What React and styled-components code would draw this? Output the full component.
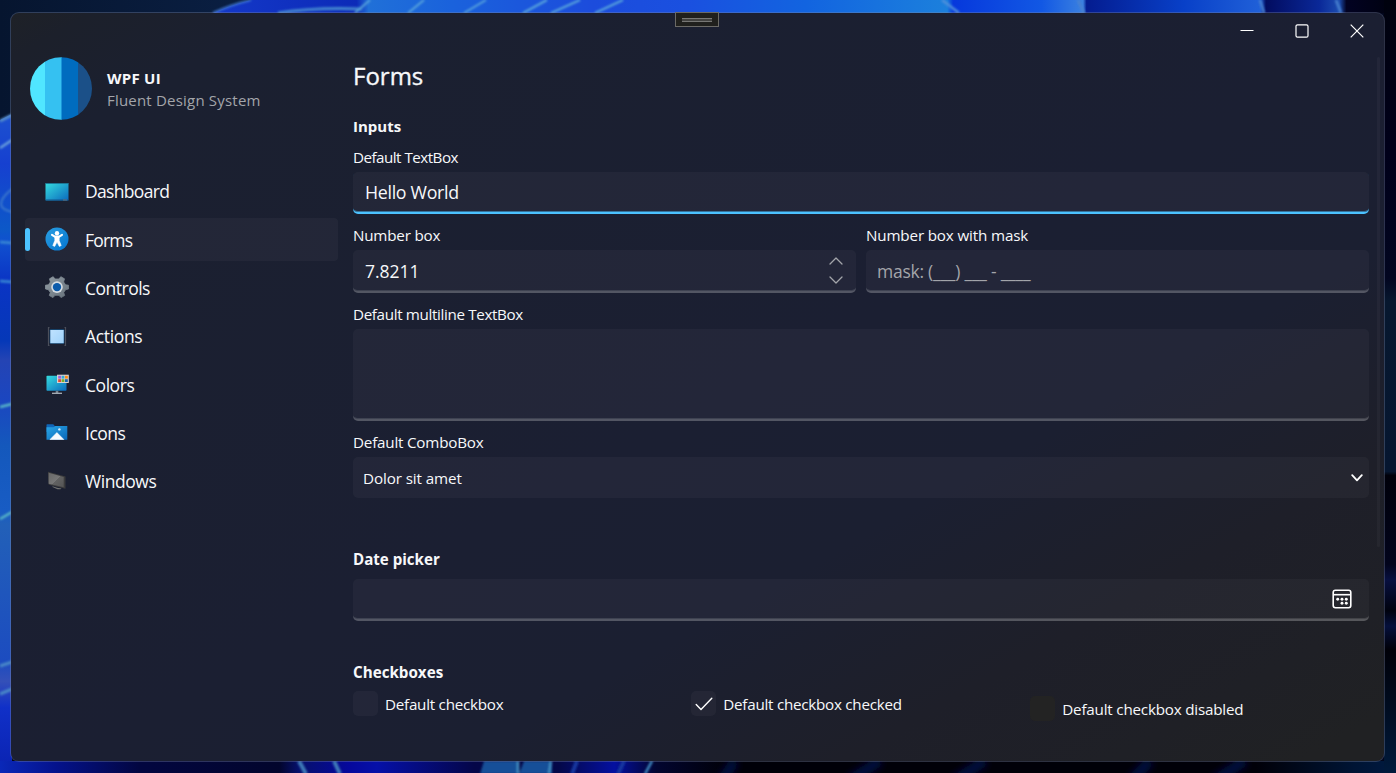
import React from "react";
import styled, { createGlobalStyle } from "styled-components";

const GlobalStyle = createGlobalStyle`
  * { box-sizing: border-box; }
  html, body { margin: 0; height: 100%; overflow: hidden; background: #02061c; }
  body { font-family: "Open Sans", "Noto Sans", sans-serif; color: #fff; }
`;

const Desktop = styled.main`
  position: relative;
  width: 1396px;
  height: 773px;
  padding: 12px 11px 11px 10px;
  overflow: hidden;
`;

const WallpaperSvg = styled.svg`
  position: absolute;
  inset: 0;
`;

const Window = styled.section`
  position: relative;
  width: 1375px;
  height: 750px;
  display: flex;
  border: 1px solid rgba(125, 135, 165, 0.36);
  border-radius: 9px;
  background: linear-gradient(151deg, #1e2127 0%, #1c202b 3%, #1b2030 10%, #1b1f32 52%, #1b1f31 66%, #1e1f29 80%, #1f2026 90%, #202123 97%);
  background-clip: padding-box;
  background-color: #1b2030;
`;

const Handle = styled.div`
  position: absolute;
  left: 664px;
  top: -1px;
  width: 44px;
  height: 15px;
  padding: 5px 6px;
  border: 1px solid #6b6a66;
  background: #20201d;
`;

const Grip = styled.div`
  height: 4px;
  background: #424240;
  border: solid #777775;
  border-width: 1px 0;
`;

const Sidebar = styled.aside`
  width: 342px;
  padding: 44px 15px 0 14px;
`;

const Brand = styled.header`
  display: flex;
  align-items: center;
  gap: 15px;
  height: 63px;
  padding-left: 5px;
`;

const BrandText = styled.div`
  display: flex;
  flex-direction: column;
  gap: 0;
`;

const Text = styled.span`
  display: block;
  white-space: nowrap;
  font-size: ${(p) => p.$size || 15}px;
  line-height: ${(p) => p.$line || 22}px;
  font-weight: ${(p) => p.$weight || 400};
  color: ${(p) => p.$color || "#f7f8fa"};
  letter-spacing: ${(p) => p.$track || 0}px;
`;

const Nav = styled.nav`
  display: flex;
  flex-direction: column;
  gap: 5.3px;
  margin-top: 49.7px;
`;

const NavItem = styled.a`
  display: flex;
  align-items: center;
  height: 43px;
  gap: 14.5px;
  border-radius: 4px;
  background: ${(p) => (p.$active ? "rgba(255,255,255,0.035)" : "transparent")};
`;

const Indicator = styled.i`
  width: 5px;
  height: 23px;
  border-radius: 2.5px;
  background: ${(p) => (p.$active ? "#4cc2ff" : "transparent")};
`;

const NavIcon = styled.svg`
  width: 24px;
  height: 24px;
  margin-bottom: 1px;
`;

const NavLabel = styled(Text)`
  margin-left: 2px;
  padding-top: 0.4px;
`;

const Main = styled.div`
  flex: 1;
  display: flex;
  flex-direction: column;
  padding-right: 4px;
`;

const TitleBar = styled.div`
  display: flex;
  justify-content: flex-end;
  height: 37px;
  margin-right: -4.5px;
`;

const WindowButton = styled.button`
  display: grid;
  place-items: center;
  width: 55px;
  height: 35px;
  padding: 0;
  border: 0;
  background: none;
`;

const Scroller = styled.div`
  display: flex;
  justify-content: space-between;
`;

const Page = styled.div`
  width: 1016px;
`;

const ScrollThumb = styled.div`
  width: 3px;
  height: 490px;
  margin-top: 7px;
  border-radius: 1.5px;
  background: rgba(255, 255, 255, 0.035);
`;

const PageTitle = styled(Text).attrs({ as: "h1" })`
  margin: 8px 0 0;
  -webkit-text-stroke: 0.35px currentColor;
`;

const Section = styled.section`
  margin-top: ${(p) => p.$top}px;
`;

const SectionTitle = styled(Text).attrs({ as: "h2" })`
  margin: 0;
`;

const Field = styled.div`
  flex: 1;
  margin-top: ${(p) => p.$top || 0}px;
`;

const FieldRow = styled.div`
  display: flex;
  gap: 10px;
`;

const InputBox = styled.div`
  display: flex;
  align-items: center;
  justify-content: space-between;
  height: ${(p) => p.$height || 42}px;
  margin-top: ${(p) => p.$gap ?? 5}px;
  padding: 0 ${(p) => p.$right || 12}px 0 ${(p) => p.$left || 12}px;
  border-radius: 5px;
  background: rgba(255, 255, 255, 0.035);
  border-bottom: ${(p) =>
    p.$plain ? "0" : p.$focused ? "2px solid #4cc2ff" : "2px solid rgba(255,255,255,0.22)"};
  box-shadow: ${(p) =>
    p.$plain ? "none" : p.$focused ? "inset 0 -1px rgba(76,194,255,0.5)" : "inset 0 -1px rgba(255,255,255,0.13)"};
`;

const InputValue = styled(Text)`
  padding-top: ${(p) => p.$drop || 0}px;
`;

const Spinner = styled.div`
  display: flex;
  flex-direction: column;
  gap: 11px;
  padding: 0 1px 1px 0;
`;

const CheckGrid = styled.div`
  display: grid;
  grid-template-columns: 338.3px 339px 338.6px;
  margin-top: 9px;
`;

const CheckItem = styled.label`
  display: flex;
  align-items: center;
  gap: 7px;
  height: 25px;
  margin-top: ${(p) => (p.$disabled ? 5 : 0)}px;
`;

const CheckBox = styled.span`
  display: grid;
  place-items: center;
  width: 25px;
  height: 25px;
  border-radius: 5px;
  background: ${(p) => (p.$disabled ? "#232323" : "rgba(255,255,255,0.035)")};
`;

const Bloom = ({ d, w = 2, c = "#4d9fd8", o = 1 }) => (
  <path d={d} fill="none" stroke={c} strokeWidth={w} opacity={o} />
);

const Wallpaper = () => (
  <WallpaperSvg width="1396" height="773" viewBox="0 0 1396 773">
    <defs>
      <linearGradient id="sky"><stop offset="0" stopColor="#06152f" /><stop offset=".6" stopColor="#0a1f42" /><stop offset="1" stopColor="#0a1f42" /></linearGradient>
      <linearGradient id="topBlue" gradientUnits="userSpaceOnUse" x1="215" x2="1396" y1="0" y2="0">
        <stop offset="0" stopColor="#1438c8" /><stop offset=".12" stopColor="#0c2ab8" /><stop offset=".13" stopColor="#2070d8" />
        <stop offset=".2" stopColor="#1a62dc" /><stop offset=".32" stopColor="#1c4cdc" /><stop offset=".4" stopColor="#1a50e0" />
        <stop offset=".5" stopColor="#1264e0" /><stop offset=".62" stopColor="#1c80dc" /><stop offset=".625" stopColor="#0638dc" />
        <stop offset=".7" stopColor="#1258e4" /><stop offset=".735" stopColor="#3a80e0" /><stop offset=".738" stopColor="#041c90" />
        <stop offset=".82" stopColor="#0840c8" /><stop offset=".885" stopColor="#2060d8" /><stop offset=".89" stopColor="#020c60" />
        <stop offset=".935" stopColor="#0a2898" /><stop offset=".952" stopColor="#1c4cb0" /><stop offset=".958" stopColor="#020222" />
        <stop offset="1" stopColor="#00020e" />
      </linearGradient>
      <linearGradient id="leftBlue" gradientUnits="userSpaceOnUse" x1="0" x2="0" y1="118" y2="773">
        <stop offset="0" stopColor="#1c50d0" /><stop offset=".07" stopColor="#1640d0" /><stop offset=".17" stopColor="#0c58c8" />
        <stop offset=".19" stopColor="#1050d0" /><stop offset=".25" stopColor="#0a34c4" /><stop offset=".34" stopColor="#0538b8" />
        <stop offset=".37" stopColor="#2444b4" /><stop offset=".43" stopColor="#1b46c0" /><stop offset=".5" stopColor="#1458bc" />
        <stop offset=".6" stopColor="#185cc4" /><stop offset=".62" stopColor="#2260b8" /><stop offset=".83" stopColor="#1c4cc0" />
        <stop offset=".86" stopColor="#3450b8" /><stop offset=".9" stopColor="#1030c8" /><stop offset="1" stopColor="#0a22b0" />
      </linearGradient>
      <linearGradient id="base" gradientUnits="userSpaceOnUse" x1="0" x2="1396" y1="0" y2="0">
        <stop offset="0" stopColor="#0a28b8" /><stop offset=".04" stopColor="#04128c" /><stop offset=".1" stopColor="#020640" />
        <stop offset=".2" stopColor="#02052c" /><stop offset=".214" stopColor="#06106c" /><stop offset=".25" stopColor="#05089c" />
        <stop offset=".27" stopColor="#0510a8" /><stop offset=".34" stopColor="#040648" /><stop offset=".4" stopColor="#040848" />
        <stop offset=".44" stopColor="#0410a0" /><stop offset=".47" stopColor="#020530" /><stop offset=".52" stopColor="#000008" />
        <stop offset=".9" stopColor="#000008" /><stop offset=".97" stopColor="#001434" /><stop offset="1" stopColor="#001a40" />
      </linearGradient>
      <linearGradient id="rightEdge" x2="0" y2="1">
        <stop offset="0" stopColor="#00020e" /><stop offset=".2" stopColor="#00001a" /><stop offset=".36" stopColor="#020620" />
        <stop offset=".39" stopColor="#07182f" /><stop offset=".61" stopColor="#061630" /><stop offset=".615" stopColor="#00000a" />
        <stop offset=".73" stopColor="#02041c" /><stop offset=".75" stopColor="#081040" /><stop offset=".79" stopColor="#00020e" />
        <stop offset=".81" stopColor="#05103c" /><stop offset=".84" stopColor="#000008" /><stop offset="1" stopColor="#001a3c" />
      </linearGradient>
      <filter id="soft"><feGaussianBlur stdDeviation="0.8" /></filter>
      <filter id="haze" x="-5%" width="110%" y="-100%" height="300%"><feGaussianBlur stdDeviation="3.5" /></filter>
    </defs>
    <rect width="1396" height="773" fill="#02061c" />
    <rect width="400" height="130" fill="url(#sky)" />
    <path d="M213 13Q230 5 251 0H1396V13Z" fill="url(#topBlue)" />
    <path d="M0 120L12 114V773H0Z" fill="url(#leftBlue)" />
    <rect y="761" width="1396" height="12" fill="url(#base)" />
    <rect x="1384" width="12" height="773" fill="url(#rightEdge)" />
    <g filter="url(#haze)">
      <Bloom d="M880 761L850 780M985 761L955 780M1150 761L1132 780M1245 761L1215 780M735 761L722 780" c="#050c40" w={10} />
    </g>
    <g filter="url(#soft)">
      <Bloom d="M213 13Q230 5 251 0" c="#3d74d0" />
      <Bloom d="M278 13Q316 7 362 9" c="#4486cf" w={3} />
      <Bloom d="M355 13L370 0M408 13L424 0M464 13L486 0M523 13L547 0M551 13L580 0M595 13L623 0" c="#58a4dc" />
      <Bloom d="M942 0Q950 6 959 13" c="#5090dc" w={2.5} />
      <Bloom d="M1078 0L1084 13M1260 0L1264 13M1336 0L1341 13" c="#4a82d0" w={2.5} />
      <Bloom d="M0 121L12 115" c="#5890c8" w={3} />
      <Bloom d="M0 148L12 140" c="#6aa0dc" w={2.5} />
      <Bloom d="M12 189Q-2 200 2 207Q4 210 12 212" c="#3c78cc" />
      <Bloom d="M0 242L12 243M0 281L12 282" c="#3a8ad4" w={2.5} />
      <Bloom d="M0 407L12 404M0 519L12 512" c="#58b8c8" w={2.5} />
      <Bloom d="M0 666L12 662M0 694L12 689" c="#4a88c8" w={3} />
      <Bloom d="M299 761L306 774M334 761L340 774" c="#407cb8" w={4} />
      <path d="M484 761H518V774H480ZM524 761H552V774H519Z" fill="#145098" />
      <Bloom d="M518 761V774M551 761L549 774M652 761L645 774" c="#408cc0" w={2.5} />
      <Bloom d="M577 761L572 774M624 761L618 774" c="#1838a0" w={4} />
    </g>
  </WallpaperSvg>
);

const Logo = () => (
  <svg width="62" height="63" viewBox="0 0 62 63">
    <defs><clipPath id="disc"><ellipse cx="31" cy="31.5" rx="31" ry="31.3" /></clipPath></defs>
    <g clipPath="url(#disc)">
      <rect width="15" height="63" fill="#50e6ff" />
      <rect x="15" width="17" height="63" fill="#35c1f1" />
      <rect x="31.5" width="17" height="63" fill="#006cbf" />
      <rect x="48" width="15" height="63" fill="#1b5088" />
    </g>
  </svg>
);

const icons = {
  Dashboard: (
    <>
      <rect x=".5" y="4" width="23" height="17.5" rx=".8" fill="url(#screen)" />
      <path d="M.5 4.5H23.5" stroke="#1d7896" />
      <path d="M.5 21H23.5" stroke="#12548c" />
      <path d="M18 21H22" stroke="#65727b" />
    </>
  ),
  Forms: (
    <>
      <circle cx="12" cy="12" r="11.5" fill="url(#round)" />
      <circle cx="12" cy="6.2" r="2.2" fill="#fff" />
      <path d="M7 7.8L10.2 9.8H13.8L17 7.8" fill="none" stroke="#fff" strokeWidth="2.1" strokeLinecap="round" strokeLinejoin="round" />
      <path d="M9.8 9H14.2V13.5L16.2 18.6L14.3 19.4L12 15L9.7 19.4L7.8 18.6L9.8 13.5Z" fill="#fff" stroke="#fff" strokeWidth=".6" strokeLinejoin="round" />
    </>
  ),
  Controls: (
    <>
      <path d="M8.2 1.7L10 4H14L15.8 1.7L19.5 3.8L18.6 7L20.6 9.8L23.5 10.2V14L20.6 14.7L18.7 17.5L19.7 20.5L16 22.6L14 20.3H10L8 22.6L4.3 20.5L5.3 17.5L3.4 14.7L.5 14V10.2L3.4 9.8L5.4 7L4.5 3.8Z" fill="url(#steel)" stroke="url(#steel)" strokeWidth=".8" strokeLinejoin="round" />
      <circle cx="12" cy="12.1" r="5.8" fill="#d5dce2" />
      <circle cx="12" cy="12.1" r="4.2" fill="#0c5bab" />
    </>
  ),
  Actions: (
    <>
      <path d="M4.5 3.5H3.5V21.5H4.5M19.5 3.5H20.5V21.5H19.5" fill="none" stroke="#4b4f5b" strokeWidth="1.2" />
      <rect x="4.7" y="5.2" width="14.6" height="14.6" rx="1" fill="#174d7c" />
      <rect x="5.3" y="6" width="13.4" height="13.2" fill="url(#pale)" />
    </>
  ),
  Colors: (
    <>
      <rect x="1.5" y="3.8" width="20" height="15" rx=".8" fill="url(#screen)" />
      <path d="M10.7 18.8H13.3V21H10.7Z" fill="#75838f" />
      <path d="M7 21.3H17" stroke="#aab2ba" strokeWidth="1.3" />
      <rect x="12" y="2.7" width="11.8" height="8.3" fill="#d6d2d0" />
      <path d="M13.2 3.8h2.8v2.8h-2.8z" fill="#9d62d8" /><path d="M16.6 3.8h2.8v2.8h-2.8z" fill="#31a9d6" /><path d="M20 3.8h2.8v2.8h-2.8z" fill="#ff8a12" />
      <path d="M13.2 7.2h2.8v2.8h-2.8z" fill="#e14a32" /><path d="M16.6 7.2h2.8v2.8h-2.8z" fill="#78ad29" /><path d="M20 7.2h2.8v2.8h-2.8z" fill="#1765b5" />
    </>
  ),
  Icons: (
    <>
      <path d="M1.5 4.8Q1.5 4.2 2.1 4.2H8.3L10 6.2H22V12H1.5Z" fill="#1066b8" />
      <path d="M1.5 7.2H8.5L10.5 6H22.3V19.8H1.5Z" fill="url(#folder)" />
      <path d="M5 19.5L11.9 12.6L18.8 19.5Z" fill="#f8fcff" stroke="#f8fcff" strokeLinejoin="round" strokeWidth=".6" />
      <circle cx="14.4" cy="9.4" r="1.2" fill="#d5edfb" />
    </>
  ),
  Windows: (
    <>
      <path d="M3 3.7L20.5 8.6V20.8L3.7 16.7Z" fill="#3b3b3c" />
      <path d="M3.6 4.8L18.7 9V19.2L3.6 15.8Z" fill="url(#graphite)" />
      <path d="M7.5 18.2L12.2 19.7L16.5 20.4L15.5 21.3H12.5L7.5 19Z" fill="#70716f" />
    </>
  ),
};

const IconDefs = () => (
  <WallpaperSvg width="0" height="0">
    <defs>
      <linearGradient id="screen" x2="1" y2="1"><stop stopColor="#35dcdf" /><stop offset="1" stopColor="#0b69bd" /></linearGradient>
      <linearGradient id="round" x2="1" y2="1"><stop stopColor="#2a9fe2" /><stop offset="1" stopColor="#0374cf" /></linearGradient>
      <linearGradient id="steel" x2="1" y2="1"><stop stopColor="#929ca3" /><stop offset="1" stopColor="#66717b" /></linearGradient>
      <linearGradient id="pale" x2="1" y2="1"><stop stopColor="#bfe2ff" /><stop offset="1" stopColor="#a0d2fa" /></linearGradient>
      <linearGradient id="folder" x2="1" y2="1"><stop stopColor="#2ba7e6" /><stop offset="1" stopColor="#0966b8" /></linearGradient>
      <linearGradient id="graphite" x2="1" y2="1"><stop stopColor="#686868" /><stop offset=".5" stopColor="#777" /><stop offset=".52" stopColor="#626262" /><stop offset="1" stopColor="#555" /></linearGradient>
    </defs>
  </WallpaperSvg>
);

const Chevron = ({ d, w, h, color = "#fff", weight = 1.3 }) => (
  <svg width={w} height={h} fill="none" stroke={color} strokeWidth={weight} strokeLinecap="round" strokeLinejoin="round"><path d={d} /></svg>
);

const CalendarIcon = () => (
  <svg width="20" height="20" fill="none" stroke="#fff" strokeWidth="1.6">
    <rect x="1.2" y="1.2" width="17.6" height="17.6" rx="2.2" />
    <path d="M1.2 5.7H18.8" />
    <g fill="#fff" stroke="none">
      <circle cx="5.7" cy="10.2" r="1.45" /><circle cx="10" cy="10.2" r="1.45" /><circle cx="14.3" cy="10.2" r="1.45" />
      <circle cx="10" cy="14.2" r="1.45" /><circle cx="14.3" cy="14.2" r="1.45" />
    </g>
  </svg>
);

const Label = ({ children, size = 15.2, track = -0.2 }) => <Text $size={size} $line={20} $track={track}>{children}</Text>;

const navItems = [
  ["Dashboard", -0.68],
  ["Forms", -0.8],
  ["Controls", -0.5],
  ["Actions", -0.35],
  ["Colors", -0.45],
  ["Icons", -0.5],
  ["Windows", -0.45],
];

export default function App() {
  return (
    <Desktop>
      <GlobalStyle />
      <IconDefs />
      <Wallpaper />
      <Window>
        <Handle><Grip /></Handle>
        <Sidebar>
          <Brand>
            <Logo />
            <BrandText>
              <Text $weight={700} $size={15} $track={0.25}>WPF UI</Text>
              <Text $color="#a3a5aa" $size={15} $track={0.2}>Fluent Design System</Text>
            </BrandText>
          </Brand>
          <Nav>
            {navItems.map(([name, track]) => (
              <NavItem key={name} $active={name === "Forms"}>
                <Indicator $active={name === "Forms"} />
                <NavIcon viewBox="0 0 24 24">{icons[name]}</NavIcon>
                <NavLabel $size={17.5} $line={24} $track={track}>{name}</NavLabel>
              </NavItem>
            ))}
          </Nav>
        </Sidebar>
        <Main>
          <TitleBar>
            <WindowButton aria-label="Minimize"><svg width="14" height="14"><path d="M.5 6.5H13.5" stroke="#fff" /></svg></WindowButton>
            <WindowButton aria-label="Maximize"><svg width="14" height="14"><rect x="1" y=".8" width="12" height="12.4" rx="1.5" fill="none" stroke="#fff" strokeWidth="1.2" /></svg></WindowButton>
            <WindowButton aria-label="Close"><svg width="14" height="14"><path d="M.7 .7L13.3 13.3M13.3 .7L.7 13.3" stroke="#fff" strokeWidth="1.2" /></svg></WindowButton>
          </TitleBar>
          <Scroller>
            <Page>
              <PageTitle $size={24} $line={36}>Forms</PageTitle>
              <Section $top={22}>
                <SectionTitle $weight={700} $size={15} $line={20}>Inputs</SectionTitle>
                <Field $top={11}>
                  <Label track={-0.52}>Default TextBox</Label>
                  <InputBox $focused><InputValue $size={17.8} $track={-0.3}>Hello World</InputValue></InputBox>
                </Field>
                <FieldRow>
                  <Field $top={11}>
                    <Label>Number box</Label>
                    <InputBox $height={43}>
                      <InputValue $drop={1} $size={17.5}>7.8211</InputValue>
                      <Spinner>
                        <Chevron w={14} h={8} d="M1 7L7 1L13 7" color="#a3a5aa" />
                        <Chevron w={14} h={8} d="M1 1L7 7L13 1" color="#a3a5aa" />
                      </Spinner>
                    </InputBox>
                  </Field>
                  <Field $top={11}>
                    <Label track={-0.15}>Number box with mask</Label>
                    <InputBox $height={43} $left={11}><InputValue $drop={1} $size={17.5} $track={-0.25} $color="#a3a5aa">mask: (___) ___ - ____</InputValue></InputBox>
                  </Field>
                </FieldRow>
                <Field $top={11}>
                  <Label track={-0.35}>Default multiline TextBox</Label>
                  <InputBox $height={92} />
                </Field>
                <Field $top={11}>
                  <Label>Default ComboBox</Label>
                  <InputBox $height={41} $left={10} $right={6} $plain>
                    <Label track={-0.1}>Dolor sit amet</Label>
                    <Chevron w={12} h={8} d="M1.2 1.2L6 6.3L10.8 1.2" weight={1.8} />
                  </InputBox>
                </Field>
              </Section>
              <Section $top={51}>
                <SectionTitle $weight={700} $size={15.1} $line={20}>Date picker</SectionTitle>
                <InputBox $gap={10} $right={17.5}><span /><CalendarIcon /></InputBox>
              </Section>
              <Section $top={41}>
                <SectionTitle $weight={700} $size={15.2} $line={20}>Checkboxes</SectionTitle>
                <CheckGrid>
                  <CheckItem><CheckBox /><Label track={-0.25}>Default checkbox</Label></CheckItem>
                  <CheckItem>
                    <CheckBox><Chevron w={18} h={14} d="M1.2 7.5L6 12.4L16.8 1.2" weight={1.4} /></CheckBox>
                    <Label track={-0.25}>Default checkbox checked</Label>
                  </CheckItem>
                  <CheckItem $disabled><CheckBox $disabled /><Label>Default checkbox disabled</Label></CheckItem>
                </CheckGrid>
              </Section>
            </Page>
            <ScrollThumb />
          </Scroller>
        </Main>
      </Window>
    </Desktop>
  );
}
